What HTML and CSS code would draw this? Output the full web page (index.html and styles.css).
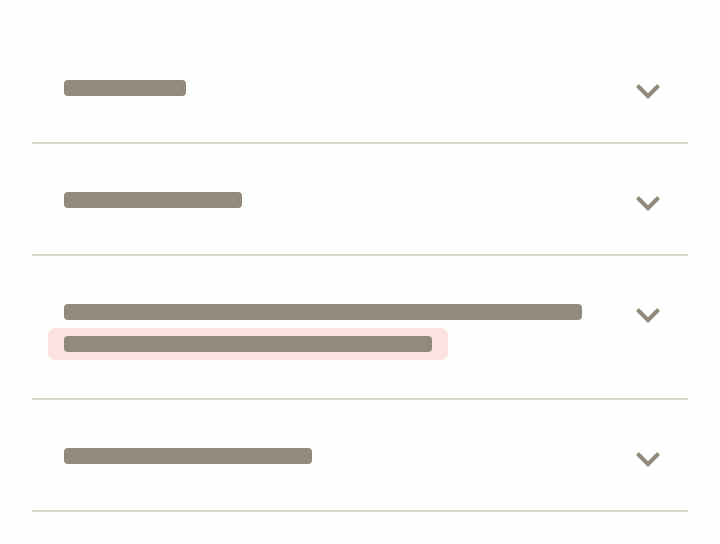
FILE: index.html
```html
<!DOCTYPE html>
<html lang="en">
<head>
    <meta charset="UTF-8">
    <meta name="viewport" content="width=device-width, initial-scale=1.0">
    <title>FAQ skeleton</title>
    <link rel="stylesheet" href="styles.css">
</head>
<body>
    <div class="faq">
        <div class="faq-item">
            <div class="faq-lines">
                <span class="bar" style="width: 122px"></span>
            </div>
            <svg class="chevron" width="24" height="15" viewBox="6 8.59 12 7.41"><path d="M16.59 8.59L12 13.17 7.41 8.59 6 10l6 6 6-6z"/></svg>
        </div>
        <div class="faq-item">
            <div class="faq-lines">
                <span class="bar" style="width: 178px"></span>
            </div>
            <svg class="chevron" width="24" height="15" viewBox="6 8.59 12 7.41"><path d="M16.59 8.59L12 13.17 7.41 8.59 6 10l6 6 6-6z"/></svg>
        </div>
        <div class="faq-item">
            <div class="faq-lines">
                <span class="bar" style="width: 518px"></span>
                <span class="mark"><span class="bar" style="width: 368px"></span></span>
            </div>
            <svg class="chevron" width="24" height="15" viewBox="6 8.59 12 7.41"><path d="M16.59 8.59L12 13.17 7.41 8.59 6 10l6 6 6-6z"/></svg>
        </div>
        <div class="faq-item">
            <div class="faq-lines">
                <span class="bar" style="width: 248px"></span>
            </div>
            <svg class="chevron" width="24" height="15" viewBox="6 8.59 12 7.41"><path d="M16.59 8.59L12 13.17 7.41 8.59 6 10l6 6 6-6z"/></svg>
        </div>
    </div>
</body>
</html>
```

FILE: styles.css
```css
body {
    margin: 0;
    background: #fefefe;
    font-family: "Liberation Sans", Arial, sans-serif;
}
.faq {
    padding: 32px 32px 0;
}
.faq-item {
    display: flex;
    align-items: flex-start;
    padding: 48px 28px 46px 32px;
    border-bottom: 2px solid #dcd7cc;
}
.faq-lines {
    flex: 1;
    display: flex;
    flex-direction: column;
    align-items: flex-start;
    gap: 16px;
}
.bar {
    display: block;
    height: 16px;
    border-radius: 4px;
    background: #938a7e;
}
.mark {
    display: block;
    margin: -8px -16px;
    padding: 8px 16px;
    border-radius: 7px;
    background: #fde2e2;
}
/* expand icon, kept out of the row height */
.chevron {
    margin: 4px 0 -3px;
    fill: #938a7e;
}
```
